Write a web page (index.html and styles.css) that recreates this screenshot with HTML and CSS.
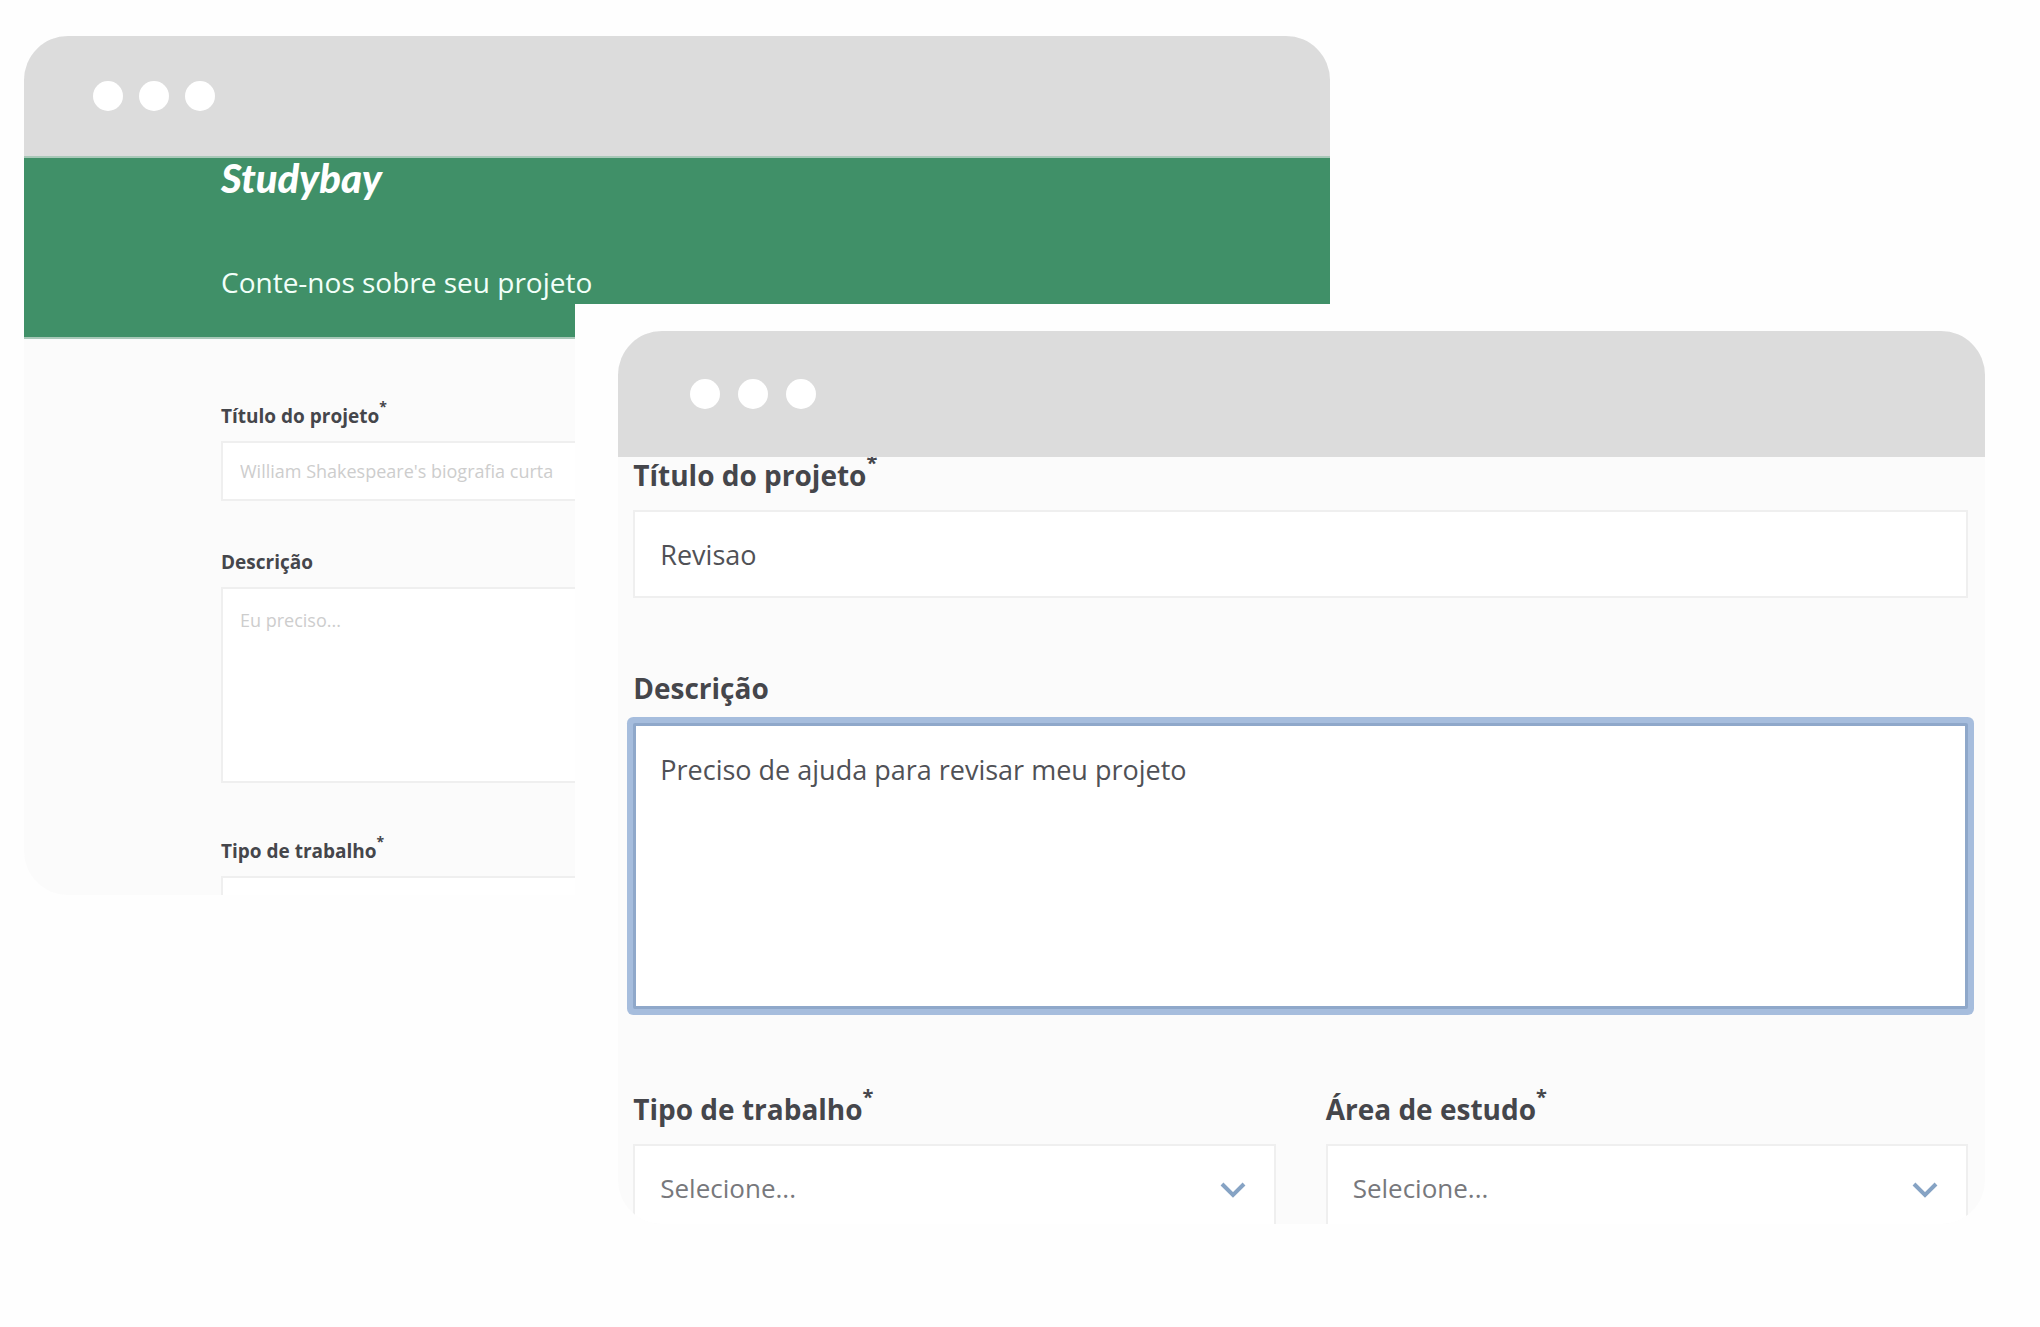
FILE: index.html
```html
<!DOCTYPE html>
<html lang="pt-BR">
<head>
  <meta charset="utf-8">
  <title>Studybay</title>
  <link rel="stylesheet" href="styles.css">
</head>
<body>
  <main class="stage">
    <section class="window window-back">
      <div class="titlebar"><span class="dot"></span><span class="dot"></span><span class="dot"></span></div>
      <header class="banner">
        <a class="logo" href="#">Studybay</a>
        <h1 class="headline">Conte-nos sobre seu projeto</h1>
      </header>
      <form class="form form-small">
        <div class="field">
          <label class="label" for="title-empty">Título do projeto<span class="req">*</span></label>
          <input class="control" id="title-empty" type="text" placeholder="William Shakespeare's biografia curta">
        </div>
        <div class="field">
          <label class="label" for="desc-empty">Descrição</label>
          <textarea class="control area" id="desc-empty" placeholder="Eu preciso..."></textarea>
        </div>
        <div class="field field-cut">
          <label class="label" for="type-empty">Tipo de trabalho<span class="req">*</span></label>
          <select class="control" id="type-empty"><option></option></select>
        </div>
      </form>
    </section>

    <div class="sheet">
      <section class="window window-front">
        <div class="titlebar"><span class="dot"></span><span class="dot"></span><span class="dot"></span></div>
        <form class="form form-large">
          <div class="field">
            <label class="label" for="title">Título do projeto<span class="req">*</span></label>
            <input class="control" id="title" type="text" value="Revisao">
          </div>
          <div class="field">
            <label class="label" for="desc">Descrição</label>
            <textarea class="control area area-active" id="desc">Preciso de ajuda para revisar meu projeto</textarea>
          </div>
          <div class="pair">
            <div class="field">
              <label class="label" for="type">Tipo de trabalho<span class="req">*</span></label>
              <div class="picker">
                <select class="control" id="type"><option>Selecione...</option></select>
                <svg class="chevron" viewBox="0 0 26 16" aria-hidden="true"><path d="M2 2l11 11L24 2"/></svg>
              </div>
            </div>
            <div class="field">
              <label class="label" for="subject">Área de estudo<span class="req">*</span></label>
              <div class="picker">
                <select class="control" id="subject"><option>Selecione...</option></select>
                <svg class="chevron" viewBox="0 0 26 16" aria-hidden="true"><path d="M2 2l11 11L24 2"/></svg>
              </div>
            </div>
          </div>
        </form>
      </section>
    </div>
  </main>
</body>
</html>
```
FILE: styles.css
```css
* { box-sizing: border-box; }

body {
  margin: 0;
  background: #fefefe;
  color: #45464b;
  font-family: "Open Sans", "Noto Sans", sans-serif;
}

.stage {
  position: relative;
  min-height: 100vh;
  overflow: hidden;
}

/* Browser windows */
.window {
  overflow: hidden;
  border-radius: 44px;
  background: #fbfbfb;
}

.window-back {
  position: absolute;
  top: 36px;
  left: 24px;
  width: 64%;
}

.sheet {
  position: absolute;
  top: 304px;
  right: 0;
  bottom: 0;
  left: 28.2%;
  padding: 27px 55px 0 43px;
  background: #fefefe;
}

.titlebar {
  display: flex;
  align-items: center;
  gap: 16px;
  height: 120px;
  padding-left: 69px;
  background: #dcdcdc;
}

.window-front .titlebar {
  gap: 18px;
  height: 126px;
  padding-left: 72px;
}

.dot {
  width: 30px;
  height: 30px;
  border-radius: 50%;
  background: #fff;
}

/* Green header */
.banner {
  display: flex;
  flex-direction: column;
  align-items: flex-start;
  gap: 60px;
  height: 183px;
  padding-left: 197px;
  border: solid #a8c8b8;
  border-width: 2px 0;
  background: #409068;
  color: #fff;
}

.logo {
  color: #fff;
  font: italic 900 40px/40px Lato, sans-serif;
  text-decoration: none;
}

.headline {
  margin: 0;
  color: #f2fff9;
  font-size: 28px;
  font-weight: 400;
  line-height: 48px;
}

/* Forms */
.form {
  display: flex;
  flex-direction: column;
  overflow: hidden;
}

.field {
  display: flex;
  flex-direction: column;
  min-width: 0;
}

.label {
  display: flex;
  font-weight: 700;
}

.control {
  width: 100%;
  margin: 0;
  border: 2px solid #efefef;
  border-radius: 0;
  background: #fff;
  color: #505156;
  font: inherit;
  font-weight: 400;
  appearance: none;
  outline: 0;
}

.control::placeholder {
  color: #cdcdcd;
  opacity: 1;
}

.area {
  display: block;
  resize: none;
}

.form-small {
  gap: 48px;
  padding: 64px 197px 0;
  font-size: 18px;
  line-height: 26px;
}

.form-small .field { gap: 12px; }
.form-small .label { font-size: 19px; }
.form-small .req { font-size: 14px; line-height: 8px; }
.form-small .control { height: 60px; padding: 0 17px; }
.form-small .area { height: 196px; padding: 18px 17px; }
.form-small .field-cut { margin: 7px 0 -41px; }

.form-large {
  gap: 72px;
  padding: 0 17px 0 15px;
  font-size: 27px;
  line-height: 36px;
}

.form-large .field { gap: 17px; }
.form-large .label { font-size: 28px; }
.form-large .req { font-size: 20px; line-height: 12px; }
.form-large .control { height: 88px; padding: 0 25px; }
.form-large .area { height: 286px; padding: 26px 24px; }

.form-large .area-active {
  border: 3px solid #8fa8ca;
  border-radius: 2px;
  box-shadow: 0 0 0 6px #a6bddd;
}

.pair {
  display: grid;
  grid-template-columns: 1fr 1fr;
  gap: 50px;
  margin: 10px 0 -8px;
}

.picker { position: relative; }
.picker .control { display: block; color: #77787c; font-size: 26px; }

.chevron {
  position: absolute;
  top: 38px;
  right: 30px;
  width: 26px;
  height: 16px;
  fill: none;
  stroke: #86a3c4;
  stroke-width: 4;
  pointer-events: none;
}
```
